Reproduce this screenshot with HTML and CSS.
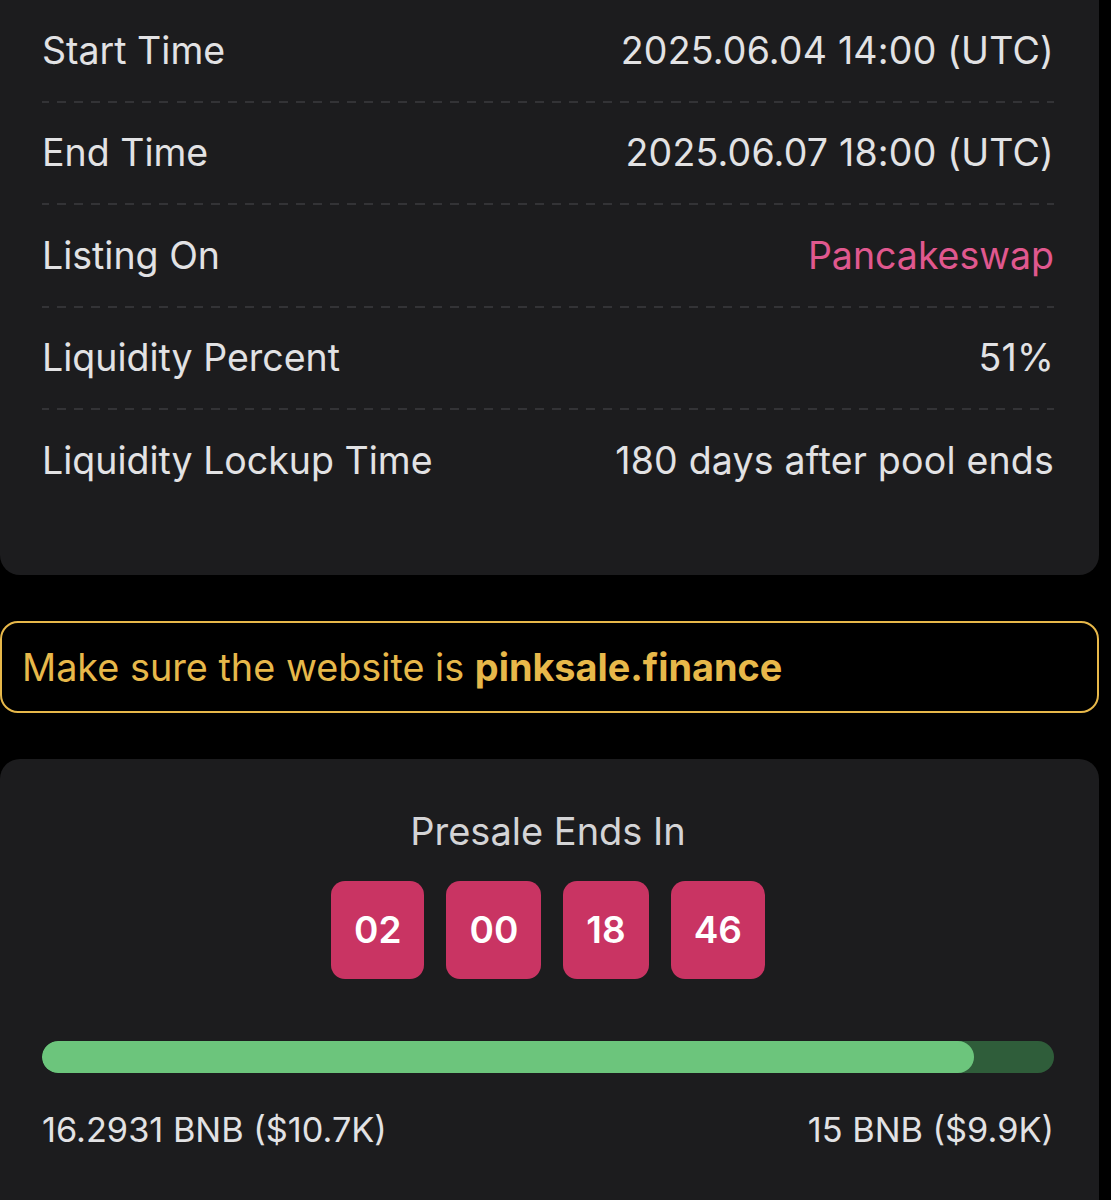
FILE: index.html
```html
<!DOCTYPE html>
<html>
<head>
    <title>Presale Info</title>
    <link rel="stylesheet" href="styles.css">
</head>
<body>
    <div class="card info-card">
        <div class="info-row">
            <span class="label">Start Time</span>
            <span class="value">2025.06.04 14:00 (UTC)</span>
        </div>
        <div class="info-row">
            <span class="label">End Time</span>
            <span class="value">2025.06.07 18:00 (UTC)</span>
        </div>
        <div class="info-row">
            <span class="label">Listing On</span>
            <span class="value link">Pancakeswap</span>
        </div>
        <div class="info-row">
            <span class="label">Liquidity Percent</span>
            <span class="value">51%</span>
        </div>
        <div class="info-row">
            <span class="label">Liquidity Lockup Time</span>
            <span class="value">180 days after pool ends</span>
        </div>
    </div>

    <div class="warning">
        <span>Make sure the website is <strong>pinksale.finance</strong></span>
    </div>

    <div class="card sale-card">
        <div class="sale-title">Presale Ends In</div>
        <div class="countdown">
            <span class="time-box">02</span>
            <span class="time-box">00</span>
            <span class="time-box">18</span>
            <span class="time-box">46</span>
        </div>
        <div class="progress">
            <!-- raised vs hard cap -->
            <div class="progress-fill" style="width: 92.1%;"></div>
        </div>
        <div class="progress-labels">
            <span>16.2931 BNB ($10.7K)</span>
            <span>15 BNB ($9.9K)</span>
        </div>
    </div>
</body>
</html>
```

FILE: styles.css
```css
body {
    margin: 0;
    background-color: #000;
    font-family: Inter, "Noto Sans", sans-serif;
    color: #e2e2e4;
    width: 1099px;
}

.card {
    background-color: #1c1c1e;
}

.info-card {
    padding: 0 45px 64px 42px;
    border-radius: 0 0 20px 20px;
}

.info-row {
    display: flex;
    justify-content: space-between;
    align-items: center;
    height: 100.5px;
    font-size: 37.5px;
}

.info-row + .info-row {
    border-top: 2px solid transparent;
    border-image: repeating-linear-gradient(to right, #333336 0 9px, transparent 9px 17px) 2;
}

.value {
    text-align: right;
    letter-spacing: 0.2px;
}

.link {
    color: #e0588f;
    letter-spacing: 0;
}

.warning {
    margin: 46px 0;
    height: 88px;
    display: flex;
    align-items: center;
    padding-left: 20px;
    border: 2px solid #e7b84a;
    border-radius: 18px;
    color: #e7b84a;
    font-size: 37.8px;
}

.warning strong {
    font-weight: 700;
}

.sale-card {
    padding: 52px 45px 50px 42px;
    border-radius: 20px 20px 0 0;
}

.sale-title {
    text-align: center;
    font-size: 38px;
    line-height: 40px;
    color: #d4d4d6;
}

.countdown {
    display: flex;
    justify-content: center;
    gap: 22px;
    margin-top: 30px;
}

.time-box {
    display: flex;
    align-items: center;
    height: 98px;
    padding: 0 23px;
    background-color: #c93463;
    border-radius: 14px;
    color: #fff;
    font-size: 37px;
    font-weight: 600;
}

.progress {
    margin-top: 62px;
    height: 32px;
    border-radius: 16px;
    background-color: #2f5d3a;
    overflow: hidden;
}

.progress-fill {
    height: 100%;
    border-radius: 16px;
    background-color: #6cc57c;
}

.progress-labels {
    display: flex;
    justify-content: space-between;
    margin-top: 37px;
    font-size: 34.3px;
    line-height: 40px;
}
```
